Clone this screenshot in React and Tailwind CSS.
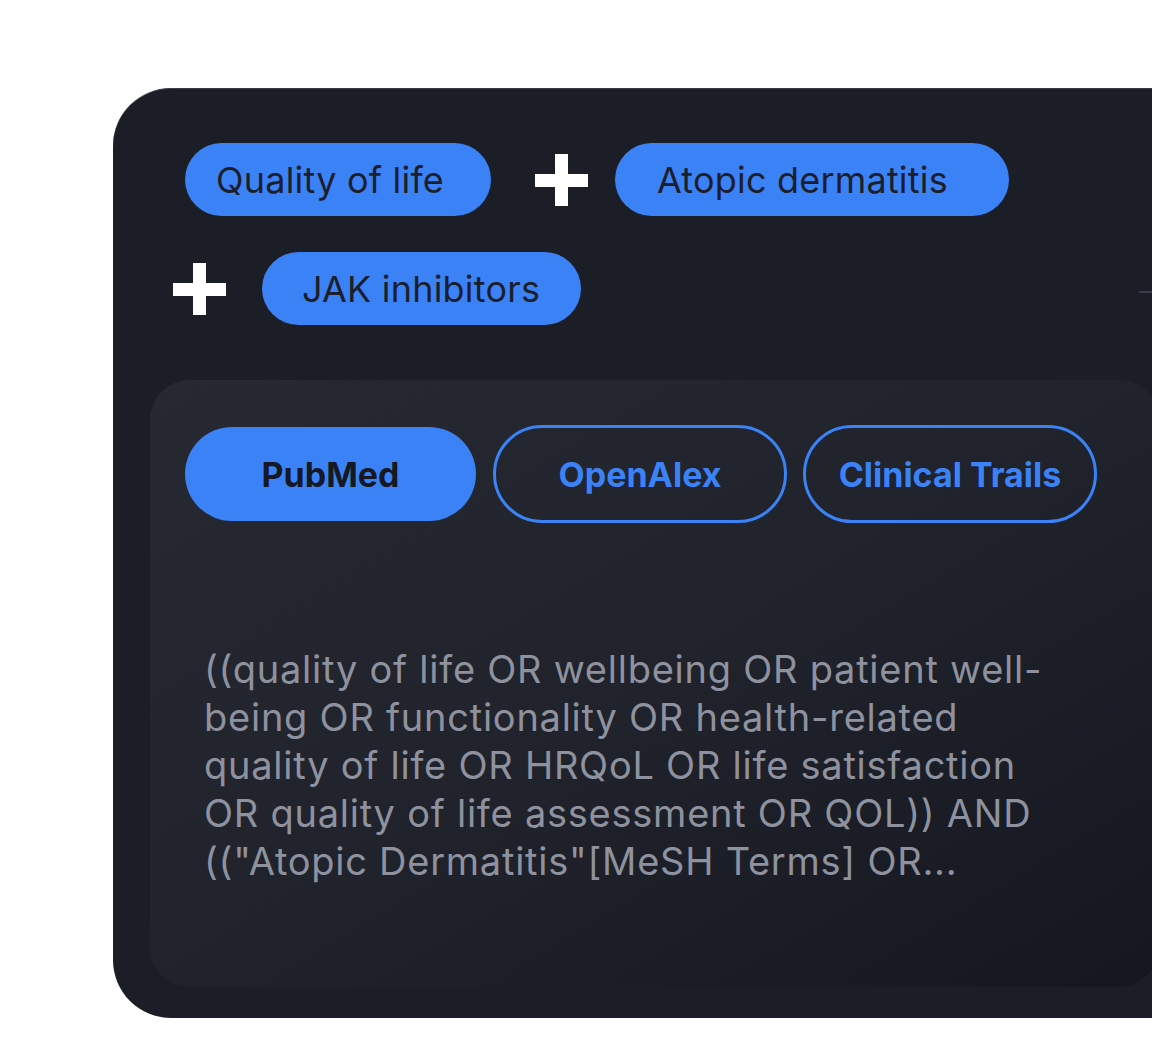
const font = { fontFamily: "Inter, 'Noto Sans', sans-serif" }

const PlusMark = () => (
  <svg width="53" height="52" viewBox="0 0 53 52" className="shrink-0">
    <rect x="20" y="0" width="13" height="52" fill="#ffffff" />
    <rect x="0" y="20" width="53" height="13" fill="#ffffff" />
  </svg>
)

const Chip = ({ children, className }) => (
  <div
    className={`h-[73px] rounded-full bg-[#3b82f6] flex items-center text-[36px] tracking-[0.2px] text-[#1c1f2b] ${className}`}
  >
    {children}
  </div>
)

const SourceTab = ({ label, active, className }) =>
  active ? (
    <button className={`h-[94px] rounded-full bg-[#3b82f6] text-[#161923] text-[34px] font-bold ${className}`}>
      {label}
    </button>
  ) : (
    <button className={`h-[98px] rounded-full border-[3px] border-[#3b82f6] text-[#3b82f6] text-[34px] font-bold ${className}`}>
      {label}
    </button>
  )

export default function App() {
  return (
    <div
      className="w-[1152px] h-[1062px] bg-white overflow-hidden pl-[113px] pt-[88px] [font-optical-sizing:none]"
      style={font}
    >
      {/* Card */}
      <div className="w-[1120px] h-[930px] rounded-[58px] bg-[#1b1d27] border-t border-[#3a3c46] pl-[37px] pt-[54px]">
        {/* Keyword chips */}
        <div className="flex items-center pl-[35px]">
          <Chip className="w-[306px] pl-[31px]">Quality of life</Chip>
          <div className="ml-[44px] mr-[27px]">
            <PlusMark />
          </div>
          <Chip className="w-[394px] pl-[42px]">Atopic dermatitis</Chip>
        </div>

        <div className="flex items-center pl-[23px] mt-[36px]">
          <PlusMark />
          <Chip className="w-[319px] pl-[40px] ml-[36px]">JAK inhibitors</Chip>
          <div className="ml-[558px] mt-[6px] w-[40px] h-[2px] bg-[#3a3d48]" />
        </div>

        {/* Query panel */}
        <div className="mt-[55px] w-[1009px] h-[607px] rounded-[40px] bg-gradient-to-br from-[#262832] via-[#20222c] to-[#141720] pl-[35px] pt-[45px]">
          <div className="flex items-center">
            <SourceTab label="PubMed" active className="w-[291px]" />
            <SourceTab label="OpenAlex" className="w-[294px] ml-[17px]" />
            <SourceTab label="Clinical Trails" className="w-[294px] ml-[16px]" />
          </div>

          <p className="mt-[122px] ml-[19px] w-[858px] text-[38px] leading-[48px] tracking-[0.75px] text-[#8e929e]">
            ((quality of life OR wellbeing OR patient well-being OR functionality OR health-related quality of life OR HRQoL OR life satisfaction OR quality of life assessment OR QOL)) AND (("Atopic Dermatitis"[MeSH Terms] OR...
          </p>
        </div>
      </div>
    </div>
  )
}
